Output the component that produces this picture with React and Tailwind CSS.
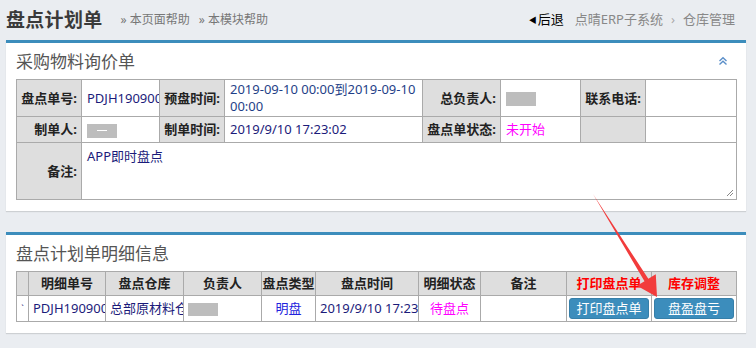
import React from 'react';

const font = { fontFamily: '"Noto Sans", "Noto Sans CJK SC", sans-serif' };

function Blur({ w = 30, h = 14, dash }) {
  return (
    <span className="inline-flex items-center justify-center bg-[#bdbdbd] align-middle" style={{ width: w, height: h }}>
      {dash && <span className="block w-[10px] h-px bg-white" />}
    </span>
  );
}

function Label({ children, className = '' }) {
  return (
    <td className={`border border-[#aaa] bg-[#dedede] text-right pr-[4px] font-bold text-[13px] text-[#222] whitespace-nowrap overflow-hidden ${className}`}>
      {children}
    </td>
  );
}

function Cell({ children, className = '' }) {
  return (
    <td className={`border border-[#aaa] bg-white px-[5px] text-[13px] text-[#1b1b7a] ${className}`}>
      {children}
    </td>
  );
}

function Panel({ title, children, extra }) {
  return (
    <div className="ml-[6px] mr-[10px] bg-white border-t-[3px] border-[#3c8dbc] shadow-[0_1px_1px_rgba(0,0,0,0.12)]">
      <div className="h-[36px] flex items-center justify-between px-[10px]">
        <span className="text-[17px] text-[#555] leading-none">{title}</span>
        {extra}
      </div>
      <div className="px-[10px]">{children}</div>
    </div>
  );
}

export default function App() {
  return (
    <div className="relative w-[756px] h-[348px] bg-[#eaedf1] overflow-hidden" style={font}>
      {/* page header */}
      <div className="h-[40px] flex items-center justify-between pl-[6px] pr-[21px]">
        <div className="flex items-center">
          <span className="text-[19px] font-bold text-[#3a3a3a] tracking-[0.3px] leading-none">盘点计划单</span>
          <span className="ml-[18px] text-[12px] text-[#777]">» 本页面帮助</span>
          <span className="ml-[9px] text-[12px] text-[#777]">» 本模块帮助</span>
        </div>
        <div className="flex items-center text-[13px]">
          <span className="text-[8px] text-black mr-[1px]">◀</span>
          <span className="text-black">后退</span>
          <span className="ml-[11px] text-[#888]">点晴ERP子系统</span>
          <span className="mx-[8px] text-[#aaa]">›</span>
          <span className="text-[#888]">仓库管理</span>
        </div>
      </div>

      <Panel
        title="采购物料询价单"
        extra={
          <svg width="10" height="10" viewBox="0 0 10 10" className="mr-[8px]">
            <path d="M1.5 5 L5 1.8 L8.5 5 M1.5 8.5 L5 5.3 L8.5 8.5" stroke="#5b8fc9" strokeWidth="1.4" fill="none" />
          </svg>
        }
      >
        <table className="w-[720px] table-fixed border-collapse leading-[17px]">
          <colgroup>
            <col className="w-[65px]" />
            <col className="w-[78px]" />
            <col className="w-[65px]" />
            <col className="w-[198px]" />
            <col className="w-[78px]" />
            <col className="w-[80px]" />
            <col className="w-[65px]" />
            <col className="w-[91px]" />
          </colgroup>
          <tbody>
            <tr className="h-[37px]">
              <Label>盘点单号:</Label>
              <Cell className="whitespace-nowrap overflow-hidden">PDJH1909001</Cell>
              <Label className="text-left pl-[3px] pr-0">预盘时间:</Label>
              <Cell className="text-[#1f3f88]">2019-09-10 00:00到2019-09-10 00:00</Cell>
              <Label>总负责人:</Label>
              <Cell><Blur w={30} h={14} /></Cell>
              <Label className="text-left pl-[3px] pr-0">联系电话:</Label>
              <Cell />
            </tr>
            <tr className="h-[26px]">
              <Label>制单人:</Label>
              <Cell><Blur w={30} h={14} dash /></Cell>
              <Label className="text-left pl-[3px] pr-0">制单时间:</Label>
              <Cell>2019/9/10 17:23:02</Cell>
              <Label>盘点单状态:</Label>
              <Cell className="text-[#ff00ff]">未开始</Cell>
              <Label />
              <Cell />
            </tr>
            <tr className="h-[57px]">
              <Label>备注:</Label>
              <td colSpan={7} className="border border-[#aaa] bg-white p-0 align-top">
                <div className="relative h-[56px] px-[5px] pt-[5px] text-[13px] text-[#1b1b7a]">
                  APP即时盘点
                  <svg width="8" height="8" viewBox="0 0 8 8" className="absolute right-[2px] bottom-[2px]">
                    <path d="M7 1 L1 7 M7 4 L4 7" stroke="#888" strokeWidth="1" />
                  </svg>
                </div>
              </td>
            </tr>
          </tbody>
        </table>
        <div className="h-[11px]" />
      </Panel>

      <div className="h-[21px]" />

      <Panel title="盘点计划单明细信息">
        <table className="w-[720px] table-fixed border-collapse leading-[17px]">
          <colgroup>
            <col className="w-[12px]" />
            <col className="w-[77px]" />
            <col className="w-[78px]" />
            <col className="w-[78px]" />
            <col className="w-[54px]" />
            <col className="w-[103px]" />
            <col className="w-[62px]" />
            <col className="w-[86px]" />
            <col className="w-[85px]" />
            <col className="w-[85px]" />
          </colgroup>
          <thead>
            <tr className="h-[24px] bg-[#dedede] text-[13px] font-bold text-[#222]">
              <th className="border border-[#aaa]" />
              <th className="border border-[#aaa]">明细单号</th>
              <th className="border border-[#aaa]">盘点仓库</th>
              <th className="border border-[#aaa]">负责人</th>
              <th className="border border-[#aaa] whitespace-nowrap overflow-hidden">盘点类型</th>
              <th className="border border-[#aaa]">盘点时间</th>
              <th className="border border-[#aaa]">明细状态</th>
              <th className="border border-[#aaa]">备注</th>
              <th className="border border-[#aaa] text-[#ff0000]">打印盘点单</th>
              <th className="border border-[#aaa] text-[#ff0000]">库存调整</th>
            </tr>
          </thead>
          <tbody>
            <tr className="h-[26px] text-[13px] text-[#1b1b7a]">
              <td className="border border-[#aaa] text-center text-[9px] align-top pt-[4px]">`</td>
              <td className="border border-[#aaa] px-[4px] whitespace-nowrap overflow-hidden">PDJH1909001</td>
              <td className="border border-[#aaa] px-[4px] whitespace-nowrap overflow-hidden">总部原材料仓库</td>
              <td className="border border-[#aaa] px-[4px]"><Blur w={30} h={13} /></td>
              <td className="border border-[#aaa] text-center text-[#2222dd]">明盘</td>
              <td className="border border-[#aaa] px-[4px] whitespace-nowrap overflow-hidden">2019/9/10 17:23:02</td>
              <td className="border border-[#aaa] text-center text-[#ff00ff]">待盘点</td>
              <td className="border border-[#aaa]" />
              <td className="border border-[#aaa] px-[2px]">
                <button className="w-full h-[21px] rounded-[3px] bg-[#3c8dbc] border border-[#367fa9] text-white text-[13px] leading-none">打印盘点单</button>
              </td>
              <td className="border border-[#aaa] px-[2px]">
                <button className="w-full h-[21px] rounded-[3px] bg-[#3c8dbc] border border-[#367fa9] text-white text-[13px] leading-none">盘盈盘亏</button>
              </td>
            </tr>
          </tbody>
        </table>
        <div className="h-[11px]" />
      </Panel>

      {/* red annotation arrow */}
      <svg className="absolute left-0 top-0 pointer-events-none" width="756" height="348">
        <polygon
          points="593,194 648.3,278.8 655.8,274.2 657,297 637,285.8 644.5,281.2"
          fill="#f23c3c"
        />
      </svg>
    </div>
  );
}
